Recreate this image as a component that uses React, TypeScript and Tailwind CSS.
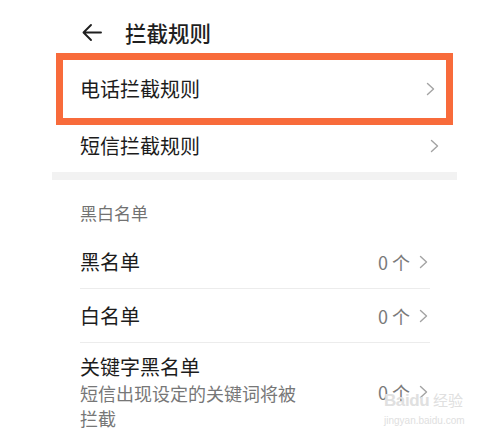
const font = "font-['Noto_Sans_CJK_SC','Noto_Sans',sans-serif]";

function Chevron() {
  return (
    <svg width="9" height="14" viewBox="0 0 9 14" fill="none" className="shrink-0">
      <path d="M1.5 1.5 L7.5 7 L1.5 12.5" stroke="#a3a3a3" strokeWidth="1.4" strokeLinecap="round" strokeLinejoin="round" />
    </svg>
  );
}

function Count() {
  return (
    <div className="flex items-center gap-[9px]">
      <span className="text-[18px] leading-[24px] text-[#7a7a7a]">0 个</span>
      <Chevron />
    </div>
  );
}

export default function App() {
  return (
    <div className={`relative w-[500px] h-[435px] overflow-hidden bg-white ${font}`}>
      <div className="ml-[52px] w-[405px]">
        <header className="h-[53px] pt-[17px] pl-[30px] flex items-start gap-[23px]">
          <svg width="20" height="30" viewBox="0 0 20 30" fill="none">
            <path d="M19 15.5 H2 M9 8 L1.5 15.5 L9 23" stroke="#1f1f1f" strokeWidth="1.9" strokeLinecap="round" strokeLinejoin="round" />
          </svg>
          <h1 className="text-[21.5px] leading-[31px] font-medium text-[#1f1f1f]">拦截规则</h1>
        </header>

        <div className="mx-[4px] h-[72px] border-[7px] border-[#f86b3b] flex items-center justify-between pl-[17px] pr-[11px]">
          <span className="text-[20px] text-[#1c1c1c]">电话拦截规则</span>
          <Chevron />
        </div>

        <div className="h-[41px] flex items-center justify-between pl-[28px] pr-[18px]">
          <span className="text-[20px] text-[#1c1c1c]">短信拦截规则</span>
          <Chevron />
        </div>

        <div className="mt-[6px] h-[8px] bg-[#f2f2f2]" />

        <div className="mt-[21px] pl-[28px] text-[17px] leading-[24px] text-[#727272]">黑白名单</div>

        <div className="mt-[10px] ml-[28px] w-[350px]">
          <div className="h-[54px] flex items-center justify-between pr-[2px] border-b border-[#ececec]">
            <span className="text-[20px] text-[#1c1c1c]">黑名单</span>
            <Count />
          </div>
          <div className="h-[54px] flex items-center justify-between pr-[2px] border-b border-[#ececec]">
            <span className="text-[20px] text-[#1c1c1c]">白名单</span>
            <Count />
          </div>
          <div className="pt-[10px] pb-[4px] flex items-center justify-between pr-[2px]">
            <div>
              <div className="text-[20px] leading-[28px] text-[#1c1c1c]">关键字黑名单</div>
              <div className="w-[222px] text-[18px] leading-[25px] text-[#777777]">短信出现设定的关键词将被拦截</div>
            </div>
            <Count />
          </div>
        </div>
      </div>

      <div className="absolute left-[384px] top-[390px] flex flex-col items-start text-[#e0e0e0]">
        <div className="flex items-baseline gap-[4px]">
          <span className="text-[17px] leading-[20px] font-bold font-['Liberation_Sans',sans-serif] tracking-tight">Baidu</span>
          <span className="text-[15px] leading-[20px]">经验</span>
        </div>
        <span className="text-[10px] leading-[14px] mt-[3px] font-['Liberation_Sans',sans-serif]">jingyan.baidu.com</span>
      </div>
    </div>
  );
}
